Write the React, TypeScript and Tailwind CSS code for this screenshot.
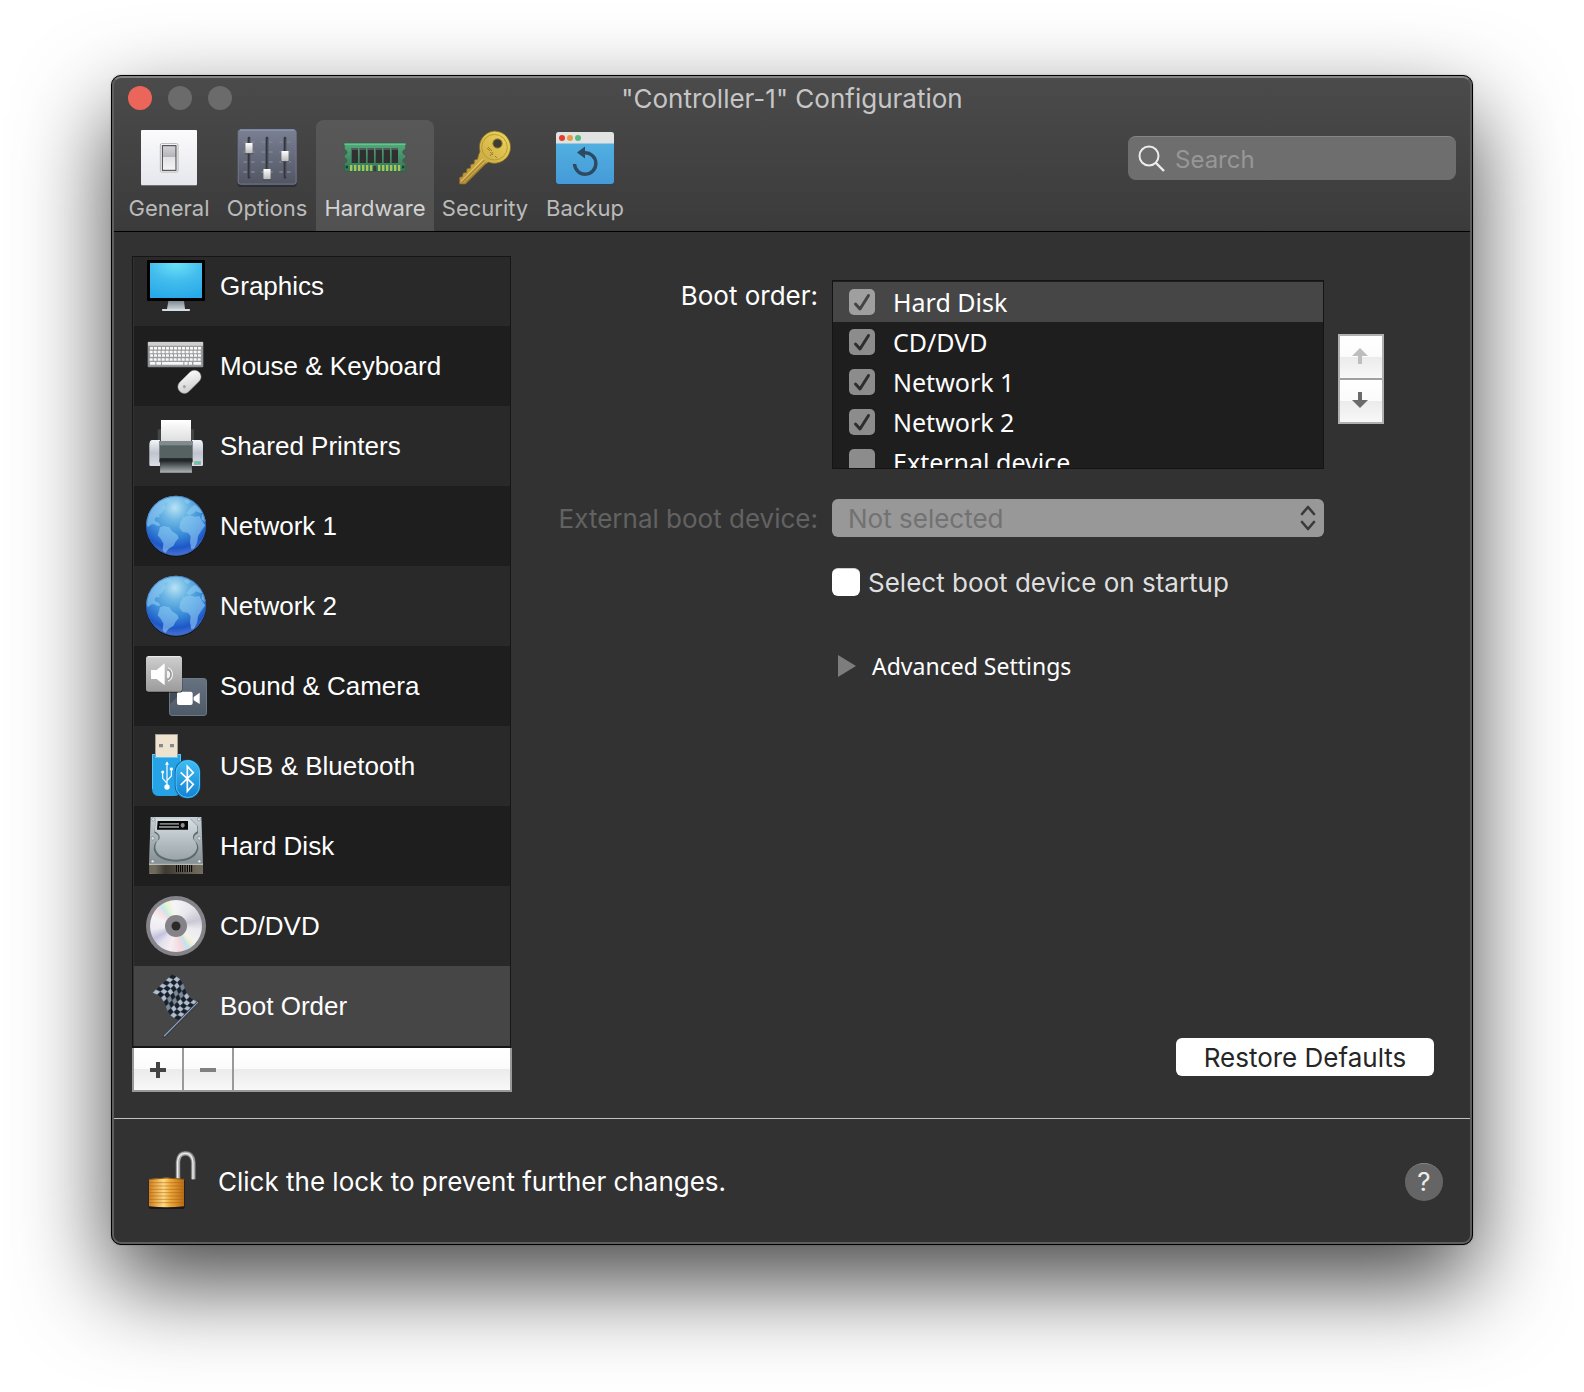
import { useState, type ReactNode } from "react";

const UI = "font-[Inter,sans-serif]";

/* ---------- Toolbar icons ---------- */

function GeneralIcon() {
  return (
    <svg viewBox="111 186 192 192" className="size-16" aria-hidden="true">
      <defs>
        <linearGradient id="plate" x1="0" y1="0" x2="0" y2="1">
          <stop offset="0" stopColor="#fbfbfd" />
          <stop offset="1" stopColor="#e6e7ec" />
        </linearGradient>
        <linearGradient id="rocker" x1="0" y1="0" x2="0" y2="1">
          <stop offset="0" stopColor="#d4d4d8" />
          <stop offset=".45" stopColor="#b4b4b9" />
          <stop offset=".46" stopColor="#e2e2e6" />
          <stop offset="1" stopColor="#f4f4f7" />
        </linearGradient>
      </defs>
      <rect x="123" y="200" width="168" height="166" rx="3" fill="#6f7070" />
      <rect x="123" y="198" width="168" height="165" rx="3" fill="url(#plate)" />
      <rect x="181" y="239" width="53" height="85" rx="4" fill="#fff" stroke="#b3b3b6" strokeWidth="3" />
      <rect x="187" y="245" width="41" height="74" fill="url(#rocker)" stroke="#3a3a3c" strokeWidth="3" />
    </svg>
  );
}

function OptionsIcon() {
  const ticks = [234, 264, 294, 324];
  return (
    <svg viewBox="403 186 192 192" className="size-16" aria-hidden="true">
      <defs>
        <linearGradient id="mixer" x1="0" y1="0" x2="0" y2="1">
          <stop offset="0" stopColor="#7a8093" />
          <stop offset="1" stopColor="#525663" />
        </linearGradient>
        <linearGradient id="knob" x1="0" y1="0" x2="0" y2="1">
          <stop offset="0" stopColor="#ffffff" />
          <stop offset="1" stopColor="#b9b9b9" />
        </linearGradient>
      </defs>
      <rect x="411" y="200" width="177" height="169" rx="8" fill="#26282d" opacity=".7" />
      <rect x="412.500" y="197.500" width="174" height="163" rx="7" fill="url(#mixer)" stroke="#757c96" strokeWidth="3" />
      <path d="M418 198H581" stroke="#98a1c6" strokeWidth="3" />
      {[445, 499, 553].map((x) => (
        <g key={x}>
          {ticks.map((y) => (
            <path key={y} d={`M${x - 17} ${y}h11M${x + 6} ${y}h11`} stroke="#7f8496" strokeWidth="4" />
          ))}
          <path d={`M${x} 222V340`} stroke="#33363e" strokeWidth="8" strokeLinecap="round" />
          <path d={`M${x + 3} 224V338`} stroke="#6d7180" strokeWidth="2" />
        </g>
      ))}
      {[[445, 237], [499, 315], [553, 261]].map(([x, y]) => (
        <g key={x}>
          <rect x={x - 12} y={y + 2} width="24" height="32" rx="2" fill="#2b2d33" opacity=".6" />
          <rect x={x - 11} y={y} width="22" height="31" rx="2" fill="url(#knob)" />
        </g>
      ))}
    </svg>
  );
}

function HardwareIcon() {
  return (
    <svg viewBox="729 186 192 192" className="size-16" aria-hidden="true">
      <defs>
        <linearGradient id="pcb" x1="0" y1="0" x2="0" y2="1">
          <stop offset="0" stopColor="#55a97c" />
          <stop offset="1" stopColor="#357555" />
        </linearGradient>
      </defs>
      <path
        d="M733 238H917V256q-9 2-9 9t9 8v8q-9 3-9 9t9 8V322H733V298q8-2 8-8t-8-9v-8q8-2 8-8t-8-9Z"
        fill="url(#pcb)"
        stroke="#2a5f45"
        strokeWidth="2"
      />
      <path d="M733 240.500H917" stroke="#5fd38e" strokeWidth="4" />
      {[755, 779, 803, 827, 851, 875].map((x) => (
        <g key={x}>
          <rect x={x} y="252" width="19" height="45" fill="#2f3030" />
          <rect x={x} y="252" width="19" height="6" fill="#555757" />
        </g>
      ))}
      {[750, 762, 774, 786, 798, 810, 834, 846, 858, 870, 882, 894].map((x) => (
        <rect key={x} x={x} y="303" width="7" height="18" fill="#a6c35c" />
      ))}
      <rect x="737" y="305" width="7" height="8" fill="#1f3d2e" />
      <rect x="906" y="305" width="7" height="8" fill="#1f3d2e" />
      <path d="M820 322v-14q4.500-5 9 0v14Z" fill="#3c3d3c" />
    </svg>
  );
}

function SecurityIcon() {
  return (
    <svg viewBox="0 0 64 64" className="size-16" aria-hidden="true">
      <defs>
        <linearGradient id="gold" x1="1" y1="0" x2="0" y2="1">
          <stop offset="0" stopColor="#f0d95c" />
          <stop offset=".5" stopColor="#d0b145" />
          <stop offset="1" stopColor="#b8913b" />
        </linearGradient>
      </defs>
      <path
        d="M41.500 5a16.200 16.200 0 1 1-6 31.300L32 38.500 12.500 58H6.500v-6.500l3-1 .6-3.500 3.400-.6.400-3.700 3.500-.6.300-3.600 3.400-.8.200-3.600 3.200-1 1-4 1.400-3.700A16.200 16.200 0 0 1 41.500 5Z"
        fill="url(#gold)"
        stroke="#7d6527"
        strokeWidth=".8"
      />
      <circle cx="41.500" cy="21.200" r="12.800" fill="none" stroke="#b2963a" strokeWidth=".9" />
      <path d="M9 56.500 31.500 34M12.500 56.800 33.500 36" stroke="#98782c" strokeWidth="1" fill="none" />
      <path d="M8 55.500 30 33" stroke="#f2e08a" strokeWidth=".8" fill="none" />
      <path d="m34 22 3 3m-2-4 4 4m-2 1 3 3m0-3-3 4m5 0 2 2" stroke="#9c8130" strokeWidth="1" fill="none" />
      <circle cx="44.500" cy="17.500" r="4.600" fill="#3f3c33" stroke="#8a722d" strokeWidth="1" />
    </svg>
  );
}

function BackupIcon() {
  return (
    <svg viewBox="0 0 64 64" className="size-16" aria-hidden="true">
      <defs>
        <linearGradient id="pane" x1="0" y1="0" x2="0" y2="1">
          <stop offset="0" stopColor="#55b6e2" />
          <stop offset="1" stopColor="#459ad8" />
        </linearGradient>
      </defs>
      <rect x="3" y="6" width="58" height="53" rx="3" fill="#24425a" opacity=".6" />
      <rect x="3" y="6" width="58" height="52" rx="3" fill="url(#pane)" />
      <path d="M3 17.500V9a3 3 0 0 1 3-3h52a3 3 0 0 1 3 3v8.500Z" fill="#e1e3e2" />
      <circle cx="9" cy="12" r="3" fill="#e43d29" />
      <circle cx="17" cy="12" r="3" fill="#ea9a40" />
      <circle cx="25" cy="12" r="3" fill="#58b87e" />
      <path d="M21.500 38A10.700 10.700 0 1 0 31.500 26.800" fill="none" stroke="#2c4a62" strokeWidth="3.400" />
      <path d="M24 26.500 32 20.500V32.500Z" fill="#2c4a62" />
    </svg>
  );
}

/* ---------- Sidebar icons ---------- */

function Icon({ viewBox, children }: { viewBox: string; children: ReactNode }) {
  return (
    <svg viewBox={viewBox} className="size-15 shrink-0 overflow-visible" aria-hidden="true">
      {children}
    </svg>
  );
}

function MonitorIcon() {
  return (
    <Icon viewBox="78 36 180 180">
      <defs>
        <radialGradient id="screen" cx=".5" cy="0" r="1">
          <stop offset="0" stopColor="#6ce3f8" />
          <stop offset=".5" stopColor="#44bdee" />
          <stop offset="1" stopColor="#29aae8" />
        </radialGradient>
        <linearGradient id="stand" x1="0" y1="0" x2="0" y2="1">
          <stop offset="0" stopColor="#7f8b90" />
          <stop offset="1" stopColor="#c3ced2" />
        </linearGradient>
      </defs>
      <rect x="81" y="48" width="174" height="123" rx="3" fill="#000" />
      <rect x="90" y="57" width="156" height="105" fill="url(#screen)" />
      <path d="M145 171h47l3 24h-54Z" fill="url(#stand)" />
      <rect x="126" y="195" width="84" height="6" rx="2" fill="#d4dde0" />
    </Icon>
  );
}

function KeyboardIcon() {
  const rows = [309, 320, 331, 343];
  return (
    <Icon viewBox="78 276 180 180">
      <defs>
        <linearGradient id="mouse" x1="0" y1="0" x2="1" y2="1">
          <stop offset="0" stopColor="#ffffff" />
          <stop offset="1" stopColor="#c9c9c9" />
        </linearGradient>
      </defs>
      <rect x="83" y="293" width="167" height="77" rx="3" fill="#8c8e8f" />
      <rect x="86" y="296" width="161" height="70" rx="2" fill="#9a9c9d" />
      <rect x="84" y="294" width="165" height="11" fill="#cfcfcf" />
      {rows.map((y, r) =>
        Array.from({ length: 13 }, (_, i) => (
          <rect key={`${r}-${i}`} x={90 + i * 12 - (r % 2 ? 1 : 0)} y={y} width="9" height="7.500" rx="1" fill="#f8f8f8" />
        )),
      )}
      {[[90, 16], [109, 14], [126, 64], [193, 10], [206, 10], [220, 23]].map(([x, w]) => (
        <rect key={x} x={x} y="354" width={w} height="8" rx="1" fill="#f8f8f8" />
      ))}
      <g transform="rotate(45 208 413)">
        <rect x="189" y="372" width="39" height="82" rx="19" fill="url(#mouse)" stroke="#8d8d8d" strokeWidth="1.500" />
        <circle cx="208" cy="434" r="4.500" fill="#a5a5a5" />
      </g>
    </Icon>
  );
}

function PrinterIcon() {
  return (
    <Icon viewBox="78 516 180 180">
      <defs>
        <linearGradient id="paper" x1="0" y1="0" x2="0" y2="1">
          <stop offset="0" stopColor="#ffffff" />
          <stop offset="1" stopColor="#dedede" />
        </linearGradient>
        <linearGradient id="shell" x1="0" y1="0" x2="0" y2="1">
          <stop offset="0" stopColor="#f4f5f8" />
          <stop offset=".5" stopColor="#bfc4cf" />
          <stop offset="1" stopColor="#dadde6" />
        </linearGradient>
        <linearGradient id="tray" x1="0" y1="0" x2="0" y2="1">
          <stop offset="0" stopColor="#2b3032" />
          <stop offset="1" stopColor="#aeb6b8" />
        </linearGradient>
      </defs>
      <path d="M113 556h10v36h-10zM213 556h9v36h-9z" fill="#3e4849" />
      <rect x="123" y="528" width="90" height="64" fill="url(#paper)" />
      <path d="M97 588h23v78H92q-4 0-4-4v-58q0-16 9-16ZM216 588h24q9 0 9 16v58q0 4-4 4h-29Z" fill="url(#shell)" />
      <rect x="118" y="591" width="100" height="52" fill="#566162" />
      <rect x="118" y="591" width="100" height="13" fill="#7f8b8c" />
      <rect x="118" y="643" width="100" height="12" fill="#22282a" />
      <path d="M121 652h94l1 34h-96Z" fill="url(#tray)" />
      <rect x="222" y="651" width="21" height="12" fill="#a3adb8" />
      <rect x="225" y="654" width="7" height="6" fill="#42e07e" />
      <rect x="234" y="654" width="6" height="6" fill="#55c7ae" />
    </Icon>
  );
}

function GlobeIcon() {
  return (
    <Icon viewBox="78 48 180 180">
      <defs>
        <radialGradient id="sea" cx=".48" cy=".2" r=".82">
          <stop offset="0" stopColor="#b8e2f5" />
          <stop offset=".25" stopColor="#6fb8e4" />
          <stop offset=".55" stopColor="#3c8fd8" />
          <stop offset=".82" stopColor="#1d57c8" />
          <stop offset="1" stopColor="#5478d4" />
        </radialGradient>
        <clipPath id="globe">
          <circle cx="168" cy="137" r="90" />
        </clipPath>
      </defs>
      <circle cx="168" cy="140" r="90" fill="#0f1013" />
      <circle cx="168" cy="137" r="90" fill="url(#sea)" />
      <g clipPath="url(#globe)" fill="#93cdf5" fillOpacity=".58">
        <path d="M78 130 84 100 100 74 118 58 138 50 150 56 160 66 150 74 140 66 132 72 140 84 130 92 124 100 116 104 120 112 110 110 104 116 106 124 114 126 122 136 114 138 100 132 92 134 84 142Z" />
        <path d="M120 142 132 138 148 142 156 154 172 164 176 174 166 186 160 198 146 206 136 220 128 212 130 190 122 176 113 166Z" />
        <path d="M180 128 190 112 208 106 226 110 238 108 244 120 256 136 244 152 234 168 232 186 222 206 214 208 210 186 212 168 204 158 188 156 178 144Z" />
        <path d="M200 100 212 84 224 74 240 86 250 100 240 98 228 94 218 102 206 106ZM190 62 200 58 212 66 202 72Z" />
        <path d="M244 118 254 126 262 120 256 100 246 104Z" />
      </g>
      <circle cx="168" cy="137" r="88.500" fill="none" stroke="#2e5fae" strokeOpacity=".5" strokeWidth="3" />
    </Icon>
  );
}

function SoundCameraIcon() {
  return (
    <Icon viewBox="78 528 180 180">
      <defs>
        <linearGradient id="speaker" x1="0" y1="0" x2="0" y2="1">
          <stop offset="0" stopColor="#cfcfcf" />
          <stop offset="1" stopColor="#9b9b9b" />
        </linearGradient>
        <linearGradient id="camera" x1="0" y1="0" x2="0" y2="1">
          <stop offset="0" stopColor="#66727f" />
          <stop offset="1" stopColor="#4e5a67" />
        </linearGradient>
      </defs>
      <rect x="148.500" y="595.500" width="111" height="111" rx="8" fill="url(#camera)" stroke="#6c7a88" strokeWidth="3" />
      <path d="M150 672 186 636V606H150Z" fill="#2c333b" opacity=".5" />
      <rect x="171" y="635" width="47" height="40" rx="6" fill="#fff" />
      <path d="M221 651 239 638v34L221 661Z" fill="#fff" />
      <rect x="78" y="531" width="109" height="107" rx="8" fill="#111" opacity=".6" />
      <rect x="78" y="528" width="108" height="107" rx="8" fill="url(#speaker)" />
      <path d="M84 530H180" stroke="#efefef" strokeWidth="3" />
      <path d="M93 570h17l24-20v66l-24-19H93Z" fill="#fff" />
      <path d="M141 572a12 12 0 0 1 0 23ZM144 562a23 23 0 0 1 0 43" fill="#fff" fillOpacity=".85" />
      <path d="M143 568a17 17 0 0 1 0 31" fill="none" stroke="#9a9a9a" strokeWidth="5" />
    </Icon>
  );
}

function UsbBluetoothIcon() {
  return (
    <Icon viewBox="78 48 180 180">
      <defs>
        <linearGradient id="bt" x1="0" y1="0" x2="0" y2="1">
          <stop offset="0" stopColor="#3fbdf2" />
          <stop offset="1" stopColor="#1381d4" />
        </linearGradient>
      </defs>
      <rect x="105" y="42" width="69" height="72" fill="#a39f97" />
      <rect x="108" y="45" width="63" height="66" fill="#efe3cf" />
      <path d="M117 72h12v10h-12zM150 72h12v10h-12z" fill="#85898d" />
      <path d="M96 102h9v9h69v-9h9v104q0 22-22 22h-43q-22 0-22-22Z" fill="#26a2e6" />
      <path d="M97.500 103V206M181.500 103v20M97 103.500h8M174 103.500h8M105 112.500h69" stroke="#56c8f7" strokeWidth="3" fill="none" />
      <path d="M141 204V128M141 190 128 175V156M141 182 154 168V147" fill="none" stroke="#fff" strokeWidth="3.500" />
      <path d="m135 134 6-10 6 10Z" fill="#fff" />
      <circle cx="141" cy="201" r="8" fill="#fff" />
      <circle cx="128" cy="156" r="4.500" fill="#fff" />
      <rect x="149.500" y="143" width="9" height="8" fill="#fff" />
      <rect x="164" y="119" width="77" height="116" rx="36" fill="#176fae" />
      <rect x="168.500" y="121.500" width="70" height="111" rx="35" fill="url(#bt)" stroke="#4fc4f5" strokeWidth="3" />
      <path d="M182 157 220 193 202 214V139L220 158 182 195" fill="none" stroke="#fff" strokeWidth="5" />
    </Icon>
  );
}

function HardDiskIcon() {
  return (
    <Icon viewBox="78 288 180 180">
      <defs>
        <linearGradient id="lid" x1="0" y1="0" x2="0" y2="1">
          <stop offset="0" stopColor="#c6d0d5" />
          <stop offset="1" stopColor="#868f93" />
        </linearGradient>
        <linearGradient id="platter" x1="0" y1="0" x2="0" y2="1">
          <stop offset="0" stopColor="#d6e0e4" />
          <stop offset="1" stopColor="#9ba5a9" />
        </linearGradient>
        <linearGradient id="base" x1="0" y1="0" x2="1" y2="0">
          <stop offset="0" stopColor="#8a8274" />
          <stop offset=".3" stopColor="#3e3931" />
          <stop offset="1" stopColor="#77705f" />
        </linearGradient>
      </defs>
      <path d="M88 432H249V462H88Z" fill="url(#base)" />
      <path d="M90 436h16v24H90zM232 436h15v24h-15z" fill="#6f695b" />
      <path d="M168 435h50v21h-50z" fill="#7a7466" />
      <path d="M170 435v21M176 435v21M182 435v21M188 435v21M195 435v21M202 435v21M209 435v21M215 435v21" stroke="#000" strokeWidth="3.500" />
      <path d="M92 291H244L249 432H87Z" fill="url(#lid)" />
      <path d="M87 433H249" stroke="#ccd0cc" strokeWidth="3" />
      <path
        d="M108 297H212L234 319V340Q216 348 224 362 236 370 235 388 226 424 169 425 110 424 101 388 101 368 113 362 122 346 103 338Z"
        fill="#5a6b71"
      />
      <path
        d="M108 296H210L232 318V334Q214 344 220 358 231 368 231 384 222 417 169 419 114 418 106 384 106 366 118 358 124 344 104 334Z"
        fill="url(#platter)"
      />
      <path d="M113 303h91v26h-93Z" fill="#060606" />
      <path d="M119 309h58v5h-58zM117 318h60v6h-60z" fill="#7d7f80" />
      <ellipse cx="188" cy="316" rx="6" ry="7" fill="#8d9091" />
      {[[100, 298], [237, 298], [98, 355], [238, 355], [98, 424], [238, 424]].map(([x, y]) => (
        <circle key={`${x}-${y}`} cx={x} cy={y} r="5" fill="#dde3e5" stroke="#6d777b" strokeWidth="1.500" />
      ))}
    </Icon>
  );
}

function DiscIcon() {
  return (
    <div className="relative size-15 shrink-0 rounded-full bg-[#858388] p-1" aria-hidden="true">
      <div className="size-full rounded-full bg-[conic-gradient(#f4f4f6_0deg,#e6e6ec_40deg,#c9c8d4_75deg,#ececf0_100deg,#f2f2f4_130deg,#f4edc8_140deg,#bfe4f6_150deg,#f3d6da_165deg,#f6eef0_195deg,#e2e1ee_220deg,#c3c1dc_240deg,#ececf2_262deg,#f4f4f6_290deg,#f5dfe0_312deg,#c9e6f6_324deg,#e2f6c8_336deg,#f4f4f4_350deg)]" />
      <svg viewBox="0 0 60 60" className="absolute inset-0 size-15">
        <circle cx="30" cy="30" r="11" fill="#858388" />
        <circle cx="30" cy="30" r="4.500" fill="#2a2a2a" />
      </svg>
    </div>
  );
}

const FLAG_COLS = 6;
const FLAG_ROWS = 8;

/* A point on the waving cloth: u runs across the flag, v along it. */
function cloth(u: number, v: number) {
  const wave = 8 * Math.sin(2 * Math.PI * v);
  const x = 156 - 58 * u + 78 * v + 0.7 * wave;
  const y = 73 + 55 * u + 83 * v - 0.7 * wave;
  return `${x.toFixed(1)},${y.toFixed(1)}`;
}

function FlagIcon() {
  const cells = Array.from({ length: FLAG_COLS * FLAG_ROWS }, (_, i) => [i % FLAG_COLS, Math.floor(i / FLAG_COLS)]);
  return (
    <Icon viewBox="78 78 180 180">
      {cells.map(([c, r]) => {
        const dark = (c + r) % 2 === 0;
        const shaded = r === 3 || r === 4;
        const fill = dark ? "#17202c" : shaded ? "#7b8795" : "#b1bdca";
        const [u0, u1] = [c / FLAG_COLS, (c + 1) / FLAG_COLS];
        const [v0, v1] = [r / FLAG_ROWS, (r + 1) / FLAG_ROWS];
        return (
          <polygon
            key={`${c}-${r}`}
            points={[cloth(u0, v0), cloth(u1, v0), cloth(u1, v1), cloth(u0, v1)].join(" ")}
            fill={fill}
            stroke="#4d5968"
            strokeWidth="1"
          />
        );
      })}
      <path d="M132 260 234 156" stroke="#2c3644" strokeWidth="8" strokeLinecap="round" />
      <path d="M133 258 233 157" stroke="#94a3b8" strokeWidth="3.500" strokeLinecap="round" />
    </Icon>
  );
}

function LockIcon() {
  return (
    <Icon viewBox="78 602 180 180">
      <defs>
        <linearGradient id="brass" x1="0" y1="0" x2="1" y2="0">
          <stop offset="0" stopColor="#d07f1c" />
          <stop offset=".42" stopColor="#ffd983" />
          <stop offset=".6" stopColor="#eda93c" />
          <stop offset="1" stopColor="#b96c14" />
        </linearGradient>
      </defs>
      <path d="M174 684V632Q176 606 196 606 218 606 220 634V684" fill="none" stroke="#5b5b5b" strokeWidth="15" />
      <path d="M174 684V632Q176 606 196 606 218 606 220 634V684" fill="none" stroke="#a9a9a9" strokeWidth="11" />
      <path d="M173 684V632Q175 606 196 606 217 606 219 634V684" fill="none" stroke="#ececec" strokeWidth="4" />
      <rect x="86" y="684" width="108" height="89" rx="6" fill="#000" opacity=".5" />
      <path d="M87 684Q140 674 192 684V765Q140 771 87 765Z" fill="url(#brass)" />
      <path
        d="M88 694H191M88 704H191M88 714H191M88 724H191M88 734H191M88 744H191M88 754H191"
        stroke="#a9600f"
        strokeOpacity=".5"
        strokeWidth="3"
      />
      <path d="M88 684Q140 676 191 684" stroke="#8a5410" strokeWidth="3" fill="none" />
    </Icon>
  );
}

/* ---------- Data ---------- */

const tabs = [
  { label: "General", icon: <GeneralIcon />, width: "w-[98px]" },
  { label: "Options", icon: <OptionsIcon />, width: "w-[98px]" },
  { label: "Hardware", icon: <HardwareIcon />, width: "w-[118px]" },
  { label: "Security", icon: <SecurityIcon />, width: "w-[102px]" },
  { label: "Backup", icon: <BackupIcon />, width: "w-[98px]" },
];

const devices = [
  { label: "Graphics", icon: <MonitorIcon /> },
  { label: "Mouse & Keyboard", icon: <KeyboardIcon /> },
  { label: "Shared Printers", icon: <PrinterIcon /> },
  { label: "Network 1", icon: <GlobeIcon /> },
  { label: "Network 2", icon: <GlobeIcon /> },
  { label: "Sound & Camera", icon: <SoundCameraIcon /> },
  { label: "USB & Bluetooth", icon: <UsbBluetoothIcon /> },
  { label: "Hard Disk", icon: <HardDiskIcon /> },
  { label: "CD/DVD", icon: <DiscIcon /> },
  { label: "Boot Order", icon: <FlagIcon /> },
];

const initialBoot = [
  { label: "Hard Disk", on: true },
  { label: "CD/DVD", on: true },
  { label: "Network 1", on: true },
  { label: "Network 2", on: true },
  { label: "External device", on: false },
];

const glossy = "bg-[linear-gradient(#ffffff,#fbfbfb_50%,#ebebeb_50%,#f8f8f8)]";

/* ---------- Sections ---------- */

function Toolbar() {
  const [tab, setTab] = useState("Hardware");
  return (
    <header className="border-b border-black bg-linear-to-b from-[#4b4b4b] to-[#3b3b3b]">
      <div className="grid h-11 grid-cols-[1fr_auto_1fr] items-center px-4">
        <div className="flex gap-4">
          <button aria-label="Close" className="size-6 rounded-full bg-[#ec655a]" />
          <button aria-label="Minimize" className="size-6 rounded-full bg-[#6b6b6b]" />
          <button aria-label="Zoom" className="size-6 rounded-full bg-[#6b6b6b]" />
        </div>
        <h1 className="pt-0.5 text-[26px] leading-8 text-[#c6c6c6]">"Controller-1" Configuration</h1>
      </div>
      <div className="flex items-start justify-between pr-4 pl-2">
        <nav className="flex">
          {tabs.map((t) => (
            <button
              key={t.label}
              onClick={() => setTab(t.label)}
              className={`flex h-[111px] flex-col items-center rounded-t-lg pt-1.5 ${t.width} ${
                t.label === tab ? "bg-linear-to-b from-[#585858] to-[#515151] text-[#d2d2d2]" : "text-[#bababa]"
              }`}
            >
              {t.icon}
              <span className="mt-1 text-[22px] leading-7">{t.label}</span>
            </button>
          ))}
        </nav>
        <label className="mt-4 flex h-11 w-[328px] items-center gap-2.5 rounded-lg border-t border-[#858585] bg-[#6e6e6e] px-2.5">
          <svg viewBox="0 0 27 27" className="size-[27px] shrink-0" fill="none" stroke="#ededed" strokeWidth="2" aria-hidden="true">
            <circle cx="11" cy="11" r="9.500" />
            <path d="m18 18 8 8" strokeWidth="2.400" />
          </svg>
          <input
            type="search"
            aria-label="Search"
            placeholder="Search"
            className="w-full min-w-0 bg-transparent pt-0.5 text-2xl text-white outline-none placeholder:text-[#979797]"
          />
        </label>
      </div>
    </header>
  );
}

function Sidebar() {
  const [current, setCurrent] = useState("Boot Order");
  return (
    <aside className="w-[380px] shrink-0">
      <ul className="mr-px flex h-[792px] flex-col justify-end overflow-hidden border border-b-2 border-[#161616] pl-px font-['Liberation_Sans',Arial,sans-serif]">
        {devices.map((d) => (
          <li key={d.label} className="shrink-0 odd:bg-[#292929] even:bg-[#1e1e1e]">
            <button
              onClick={() => setCurrent(d.label)}
              className={`flex h-20 w-full items-center gap-3.5 pl-3 text-left text-[26px] text-white ${
                d.label === current ? "bg-[#464646]" : ""
              }`}
            >
              {d.icon}
              {d.label}
            </button>
          </li>
        ))}
      </ul>
      <div className={`flex h-11 border-2 border-t-0 border-[#999999] ${glossy}`}>
        <button aria-label="Add device" className="flex w-[50px] items-center justify-center border-r-2 border-[#999999] pt-0.5">
          <svg viewBox="0 0 16 16" className="size-4" aria-hidden="true">
            <path d="M8 0v16M0 8h16" stroke="#444" strokeWidth="4" />
          </svg>
        </button>
        <button aria-label="Remove device" className="flex w-[50px] items-center justify-center border-r-2 border-[#999999] pt-0.5">
          <svg viewBox="0 0 16 16" className="size-4" aria-hidden="true">
            <path d="M0 8h16" stroke="#808080" strokeWidth="4" />
          </svg>
        </button>
      </div>
    </aside>
  );
}

function BootSettings() {
  const [boot, setBoot] = useState(initialBoot);
  const [ask, setAsk] = useState(false);
  const toggle = (label: string) => setBoot(boot.map((b) => (b.label === label ? { ...b, on: !b.on } : b)));

  return (
    <section className="flex min-w-0 flex-1 flex-col pt-6">
      <div className="grid grid-cols-[306px_minmax(0,1fr)_46px] gap-x-3.5 pr-[88px] text-[26px] leading-8">
        <span id="boot-order" className="text-right text-white">
          Boot order:
        </span>
        <ul
          aria-labelledby="boot-order"
          className="h-[189px] overflow-hidden border border-[#141414] bg-[#1e1e1e] pt-px font-['Noto_Sans',sans-serif] text-[25px] text-white"
        >
          {boot.map((b, i) => (
            <li key={b.label} className={i === 0 ? "bg-[#464646]" : ""}>
              <label className="flex h-10 items-center gap-[18px] pl-4">
                <span className="relative size-[26px]">
                  <input
                    type="checkbox"
                    checked={b.on}
                    onChange={() => toggle(b.label)}
                    className={`block size-full appearance-none rounded-[5px] ${i === 0 ? "bg-[#9f9f9f]" : "bg-[#8c8c8c]"}`}
                  />
                  {b.on && (
                    <svg viewBox="0 0 26 26" className="pointer-events-none absolute inset-0 size-full" aria-hidden="true">
                      <path
                        d="m6.500 15 4.500 5 8.500-13.500"
                        fill="none"
                        stroke={i === 0 ? "#444" : "#2e2e2e"}
                        strokeWidth="3"
                        strokeLinecap="round"
                        strokeLinejoin="round"
                      />
                    </svg>
                  )}
                </span>
                {b.label}
              </label>
            </li>
          ))}
        </ul>
        <div className="mt-[54px] h-[90px] border-2 border-[#b0b0b0]">
          <button aria-label="Move up" disabled className={`flex h-11 w-full items-center justify-center border-b-2 border-[#a0a0a0] pr-0.5 pb-0.5 ${glossy}`}>
            <svg viewBox="0 0 16 16" className="size-4" fill="#bdbdbd" aria-hidden="true">
              <path d="M8 0 16 8H10V16H6V8H0Z" />
            </svg>
          </button>
          <button aria-label="Move down" className={`flex h-[42px] w-full items-center justify-center pr-0.5 pb-0.5 ${glossy}`}>
            <svg viewBox="0 0 16 16" className="size-4" fill="#6a6a6a" aria-hidden="true">
              <path d="M8 16 16 8H10V0H6V8H0Z" />
            </svg>
          </button>
        </div>

        <label htmlFor="external" className="mt-[34px] text-right text-[#626262]">
          External boot device:
        </label>
        <div className="relative mt-[30px]">
          <select
            id="external"
            disabled
            className="block h-[38px] w-full appearance-none rounded-md bg-[#989898] px-4 pt-0.5 leading-9 text-[#727272] opacity-100"
          >
            <option>Not selected</option>
          </select>
          <svg viewBox="0 0 16 26" className="pointer-events-none absolute top-1.5 right-2 h-[26px] w-4" fill="none" stroke="#3a3a3a" strokeWidth="2.600" strokeLinecap="round" strokeLinejoin="round" aria-hidden="true">
            <path d="m2 9 6-7 6 7M2 17l6 7 6-7" />
          </svg>
        </div>

        <div className="col-start-2 mt-[29px] flex items-center gap-2 text-[#dfdfdf]">
          <input
            id="ask"
            type="checkbox"
            checked={ask}
            onChange={() => setAsk(!ask)}
            className="size-7 appearance-none rounded-md border-t border-[#cfcfcf] bg-white checked:bg-blue-500"
          />
          <label htmlFor="ask" className="pt-0.5 leading-[30px]">
            Select boot device on startup
          </label>
        </div>

        <button
          aria-expanded="false"
          className="col-start-2 mt-[52px] flex items-center gap-4 pl-1.5 text-left font-['Noto_Sans',sans-serif] text-[23px] text-white"
        >
          <svg viewBox="0 0 18 22" className="h-[22px] w-[18px]" fill="#7d7d7d" aria-hidden="true">
            <path d="M0 0 18 11 0 22Z" />
          </svg>
          Advanced Settings
        </button>
      </div>
      <button className="mt-auto mr-[38px] mb-4 h-[38px] w-[258px] self-end rounded-md bg-white pt-0.5 text-[26px] leading-9 text-[#262626]">
        Restore Defaults
      </button>
    </section>
  );
}

export default function App() {
  return (
    <div className={`min-h-screen overflow-hidden bg-white px-[111px] pt-[75px] pb-[147px] ${UI}`}>
      <main className="relative overflow-hidden rounded-[10px] border border-black bg-[#323232] shadow-[0_0_2px_rgba(0,0,0,0.25),0_38px_92px_rgba(0,0,0,0.72)]">
        <Toolbar />
        <div className="flex pt-6 pb-[26px] pl-5">
          <Sidebar />
          <BootSettings />
        </div>
        <footer className="flex h-[126px] items-center border-t border-[#bfc2c1] pr-[29px] pl-[34px]">
          <button aria-label="Lock">
            <LockIcon />
          </button>
          <p className="flex-1 pl-3 text-[26px] leading-8 text-white">Click the lock to prevent further changes.</p>
          <button
            aria-label="Help"
            className="size-[38px] rounded-full border-t border-[#858585] bg-[#656565] text-[26px] leading-8 text-[#ededed]"
          >
            ?
          </button>
        </footer>
        <div className="pointer-events-none absolute inset-0 rounded-[9px] border-2 border-t-[#858585] border-r-[#5e5e5e] border-b-[#5e5e5e] border-l-[#5e5e5e]" />
      </main>
    </div>
  );
}
